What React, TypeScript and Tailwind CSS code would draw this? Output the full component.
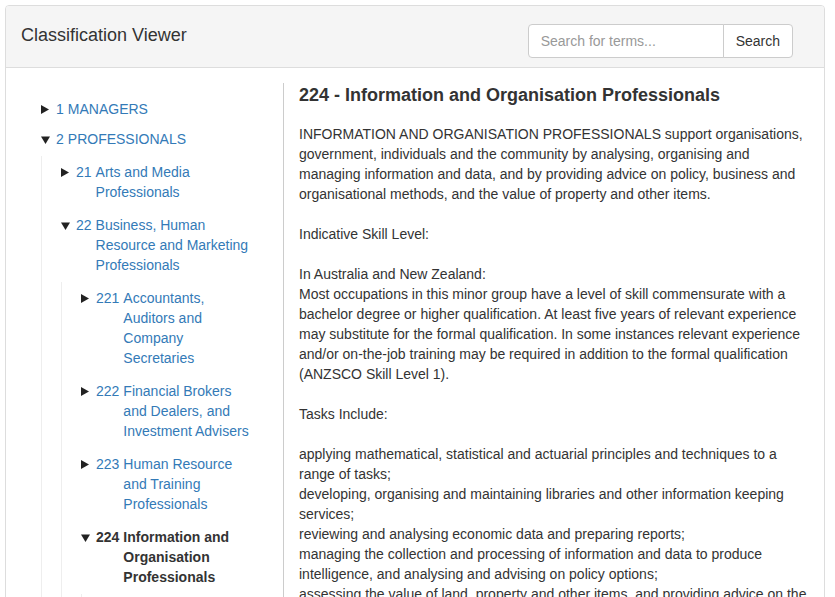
import React from "react";

type Node = {
  code: string;
  label: string;
  open?: boolean;
  current?: boolean;
  children?: Node[];
};

const tree: Node[] = [
  { code: "1", label: "MANAGERS" },
  {
    code: "2",
    label: "PROFESSIONALS",
    open: true,
    children: [
      { code: "21", label: "Arts and Media Professionals" },
      {
        code: "22",
        label: "Business, Human Resource and Marketing Professionals",
        open: true,
        children: [
          { code: "221", label: "Accountants, Auditors and Company Secretaries" },
          { code: "222", label: "Financial Brokers and Dealers, and Investment Advisers" },
          { code: "223", label: "Human Resource and Training Professionals" },
          {
            code: "224",
            label: "Information and Organisation Professionals",
            open: true,
            current: true,
            children: [
              { code: "2241", label: "Actuaries, Mathematicians and Statisticians" },
              { code: "2242", label: "Archivists, Curators and Records Managers" },
              { code: "2243", label: "Economists" },
              { code: "2244", label: "Intelligence and Policy Analysts" },
              { code: "2245", label: "Land Economists and Valuers" },
              { code: "2246", label: "Librarians" },
              { code: "2247", label: "Management and Organisation Analysts" },
              { code: "2249", label: "Other Information and Organisation Professionals" },
            ],
          },
          { code: "225", label: "Sales, Marketing and Public Relations Professionals" },
        ],
      },
      { code: "23", label: "Design, Engineering, Science and Transport Professionals" },
      { code: "24", label: "Education Professionals" },
      { code: "25", label: "Health Professionals" },
      { code: "26", label: "ICT Professionals" },
      { code: "27", label: "Legal, Social and Welfare Professionals" },
    ],
  },
  { code: "3", label: "TECHNICIANS AND TRADES WORKERS" },
  { code: "4", label: "COMMUNITY AND PERSONAL SERVICE WORKERS" },
  { code: "5", label: "CLERICAL AND ADMINISTRATIVE WORKERS" },
  { code: "6", label: "SALES WORKERS" },
  { code: "7", label: "MACHINERY OPERATORS AND DRIVERS" },
  { code: "8", label: "LABOURERS" },
];

function Tri({ open }: { open?: boolean }) {
  return open ? (
    <svg width="9" height="8" viewBox="0 0 9 8" className="block">
      <polygon points="0,0.5 9,0.5 4.5,8" fill="#222" />
    </svg>
  ) : (
    <svg width="8" height="9" viewBox="0 0 8 9" className="block">
      <polygon points="0,0 8,4.5 0,9" fill="#222" />
    </svg>
  );
}

function Row({ node }: { node: Node }) {
  const color = node.current ? "text-[#333] font-bold" : "text-[#337ab7]";
  return (
    <div className="flex text-[14px] leading-[20px]">
      <span className="w-[15px] h-[20px] shrink-0 flex items-center pt-[1px]">
        <Tri open={node.open} />
      </span>
      <span className={`shrink-0 ${color}`}>{node.code}</span>
      <span className={`ml-[4px] min-w-0 ${color}`}>{node.label}</span>
    </div>
  );
}

function SubList({ nodes }: { nodes: Node[] }) {
  return (
    <ul className="border-l border-[#eee] pl-[19px]">
      {nodes.map((n) => (
        <li key={n.code} className="mt-[2px]">
          <div className="pt-[6px] pb-[5px]">
            <Row node={n} />
          </div>
          {n.open && n.children && <SubList nodes={n.children} />}
        </li>
      ))}
    </ul>
  );
}

export default function App() {
  return (
    <div className="font-['Liberation_Sans',Arial,sans-serif] text-[#333] bg-white min-h-screen">
      <div className="ml-[5px] mt-[5px] w-[820px] border border-[#ddd] rounded-[4px]">
        <div className="h-[62px] bg-[#f5f5f5] border-b border-[#ddd] rounded-t-[3px] flex items-start pl-[15px] pr-[31px]">
          <h3 className="mt-[19px] text-[18px] leading-[20px] text-[#333]">Classification Viewer</h3>
          <div className="ml-auto mt-[18px] flex">
            <input
              type="text"
              placeholder="Search for terms..."
              className="w-[196px] h-[34px] border border-[#ccc] rounded-l-[4px] px-[12px] text-[14px] text-[#555] placeholder:text-[#999] bg-white outline-none"
            />
            <button className="-ml-px h-[34px] border border-[#ccc] rounded-r-[4px] px-[12px] text-[14px] text-[#333] bg-white">
              Search
            </button>
          </div>
        </div>
        <div className="flex pt-[15px]">
          <div className="w-[277px] shrink-0 pl-[35px] pr-[28px] pt-[11px]">
            <ul>
              {tree.map((n) => (
                <li key={n.code}>
                  <div className="py-[5px]">
                    <Row node={n} />
                  </div>
                  {n.open && n.children && <SubList nodes={n.children} />}
                </li>
              ))}
            </ul>
          </div>
          <div className="flex-1 border-l border-[#ccc] px-[15px] text-[14px] leading-[20px] text-[#333]">
            <h4 className="mt-[2px] mb-[19px] text-[18px] leading-[20px] font-bold text-[#333]">
              224 - Information and Organisation Professionals
            </h4>
            <p>
              INFORMATION AND ORGANISATION PROFESSIONALS support organisations, government, individuals and the
              community by analysing, organising and managing information and data, and by providing advice on policy,
              business and organisational methods, and the value of property and other items.
              <br />
              <br />
              Indicative Skill Level:
              <br />
              <br />
              In Australia and New Zealand:
              <br />
              Most occupations in this minor group have a level of skill commensurate with a bachelor degree or higher
              qualification. At least five years of relevant experience may substitute for the formal qualification. In
              some instances relevant experience and/or on-the-job training may be required in addition to the formal
              qualification (ANZSCO Skill Level 1).
              <br />
              <br />
              Tasks Include:
              <br />
              <br />
              applying mathematical, statistical and actuarial principles and techniques to a range of tasks;
              <br />
              developing, organising and maintaining libraries and other information keeping services;
              <br />
              reviewing and analysing economic data and preparing reports;
              <br />
              managing the collection and processing of information and data to produce intelligence, and analysing and
              advising on policy options;
              <br />
              assessing the value of land, property and other items, and providing advice on the value of property and
              related matters;
              <br />
              analysing and advising on organisational structures, methods, systems and procedures.
            </p>
          </div>
        </div>
      </div>
    </div>
  );
}
